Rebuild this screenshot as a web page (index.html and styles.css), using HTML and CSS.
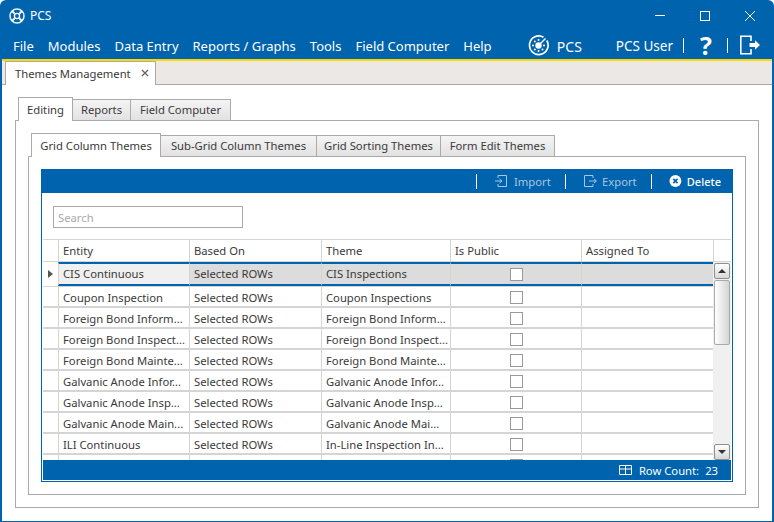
FILE: index.html
```html
<!DOCTYPE html>
<html lang="en">
<head>
<meta charset="utf-8">
<title>PCS</title>
<link rel="stylesheet" href="styles.css">
</head>
<body>
<div class="window">
  <header class="titlebar">
    <svg class="app-logo" width="16" height="16" viewBox="0 0 16 16"><circle cx="8" cy="8" r="7" fill="none" stroke="#fff" stroke-width="1.6" opacity=".9"/><circle cx="8" cy="8" r="2.6" fill="none" stroke="#fff" stroke-width="1.4"/><path d="M3 3l2.6 2.6M13 3l-2.6 2.6M3 13l2.6-2.6M13 13l-2.6-2.6" stroke="#fff" stroke-width="1.8"/></svg>
    <span class="app-title">PCS</span>
    <div class="win-controls">
      <svg width="12" height="12" viewBox="0 0 12 12"><path d="M1 5.500h10" stroke="#fff"/></svg>
      <svg width="12" height="12" viewBox="0 0 12 12"><rect x="1.500" y="1.500" width="9" height="9" fill="none" stroke="#fff"/></svg>
      <svg width="12" height="12" viewBox="0 0 12 12"><path d="M1 1l10 10M11 1L1 11" stroke="#fff"/></svg>
    </div>
  </header>
  <nav class="menubar">
    <span>File</span><span>Modules</span><span>Data Entry</span><span>Reports / Graphs</span><span>Tools</span><span>Field Computer</span><span>Help</span>
    <div class="menu-right">
      <svg class="pcs-logo" width="21" height="21" viewBox="0 0 21 21"><path d="M15.500 2.200A9.300 9.300 0 1 0 18.800 5.500" fill="none" stroke="#fff" stroke-width="1.700"/><circle cx="10.500" cy="10.500" r="3.200" fill="#fff"/><path d="M12.500 8.500l5-5" stroke="#fff" stroke-width="1.500"/><circle cx="5" cy="10.500" r="1" fill="#fff"/><circle cx="10.500" cy="16" r="1" fill="#fff"/><circle cx="6.800" cy="6.500" r="1" fill="#fff"/><circle cx="6.800" cy="14.500" r="1" fill="#fff"/><circle cx="14.500" cy="14.500" r="1" fill="#fff"/><circle cx="16" cy="10.500" r="1" fill="#fff"/><circle cx="10.500" cy="5" r="1" fill="#fff"/></svg>
      <span class="pcs-name">PCS</span>
      <span class="user">PCS User</span>
      <i class="sep"></i>
      <span class="help">?</span>
      <i class="sep"></i>
      <svg class="exit" width="20" height="20" viewBox="0 0 20 20"><path d="M11 6V1.200H.8v17.600H11V14" fill="none" stroke="#fff" stroke-width="1.600"/><path d="M9.500 8H15V5.200l5 4.800-5 4.800V12H9.500z" fill="#fff"/></svg>
    </div>
  </nav>
  <div class="accent"></div>
  <div class="doc-strip">
    <div class="doc-tab">Themes Management<svg class="close" width="8" height="8" viewBox="0 0 8 8"><path d="M1 1l6 6M7 1L1 7" stroke="#666" stroke-width="1.400"/></svg></div>
  </div>
  <main class="content">
    <div class="tabs">
      <span class="tab active t-editing">Editing</span>
      <span class="tab t-reports">Reports</span>
      <span class="tab t-field">Field Computer</span>
    </div>
    <section class="panel outer">
      <div class="tabs">
        <span class="tab active t-grid">Grid Column Themes</span>
        <span class="tab t-sub">Sub-Grid Column Themes</span>
        <span class="tab t-sort">Grid Sorting Themes</span>
        <span class="tab t-form">Form Edit Themes</span>
      </div>
      <section class="panel inner">
        <div class="gridbox">
          <div class="toolbar">
            <i class="tsep"></i>
            <span class="tool off t-import"><svg width="14" height="14" viewBox="0 0 14 14"><path d="M4 4V1.500h8.500v11H4V10" fill="none" stroke="#a9c6e0"/><path d="M1 7h6.500M5.500 5l2.500 2-2.500 2" fill="none" stroke="#a9c6e0"/></svg>Import</span>
            <i class="tsep"></i>
            <span class="tool off t-export"><svg width="15" height="14" viewBox="0 0 15 14"><path d="M10 4V1.500H1.500v11H10V10" fill="none" stroke="#a9c6e0"/><path d="M6 7h7M11 5l2.500 2L11 9" fill="none" stroke="#a9c6e0"/></svg>Export</span>
            <i class="tsep"></i>
            <span class="tool on"><svg width="14" height="14" viewBox="0 0 14 14"><circle cx="7" cy="7" r="6.500" fill="#fff"/><path d="M4.700 4.700l4.600 4.600M9.300 4.700L4.700 9.300" stroke="#0063ad" stroke-width="1.800"/></svg>Delete</span>
          </div>
          <div class="search-area"><div class="search">Search</div></div>
          <div class="grid-head">
            <div></div><div>Entity</div><div>Based On</div><div>Theme</div><div>Is Public</div><div>Assigned To</div><div></div>
          </div>
          <div class="grid-main">
            <div class="rows">
              <div class="row selected"><div class="rh"><i class="arrow"></i></div><div class="c first">CIS Continuous</div><div class="c">Selected ROWs</div><div class="c">CIS Inspections</div><div class="c ck"><i class="box"></i></div><div class="c"></div></div>
              <div class="row"><div class="rh"></div><div class="c">Coupon Inspection</div><div class="c">Selected ROWs</div><div class="c">Coupon Inspections</div><div class="c ck"><i class="box"></i></div><div class="c"></div></div>
              <div class="row"><div class="rh"></div><div class="c">Foreign Bond Inform...</div><div class="c">Selected ROWs</div><div class="c">Foreign Bond Inform...</div><div class="c ck"><i class="box"></i></div><div class="c"></div></div>
              <div class="row"><div class="rh"></div><div class="c">Foreign Bond Inspect...</div><div class="c">Selected ROWs</div><div class="c">Foreign Bond Inspect...</div><div class="c ck"><i class="box"></i></div><div class="c"></div></div>
              <div class="row"><div class="rh"></div><div class="c">Foreign Bond Mainte...</div><div class="c">Selected ROWs</div><div class="c">Foreign Bond Mainte...</div><div class="c ck"><i class="box"></i></div><div class="c"></div></div>
              <div class="row"><div class="rh"></div><div class="c">Galvanic Anode Infor...</div><div class="c">Selected ROWs</div><div class="c">Galvanic Anode Infor...</div><div class="c ck"><i class="box"></i></div><div class="c"></div></div>
              <div class="row"><div class="rh"></div><div class="c">Galvanic Anode Insp...</div><div class="c">Selected ROWs</div><div class="c">Galvanic Anode Insp...</div><div class="c ck"><i class="box"></i></div><div class="c"></div></div>
              <div class="row"><div class="rh"></div><div class="c">Galvanic Anode Main...</div><div class="c">Selected ROWs</div><div class="c">Galvanic Anode Mai...</div><div class="c ck"><i class="box"></i></div><div class="c"></div></div>
              <div class="row"><div class="rh"></div><div class="c">ILI Continuous</div><div class="c">Selected ROWs</div><div class="c">In-Line Inspection In...</div><div class="c ck"><i class="box"></i></div><div class="c"></div></div>
              <div class="row"><div class="rh"></div><div class="c"></div><div class="c"></div><div class="c"></div><div class="c ck"><i class="box"></i></div><div class="c"></div></div>
            </div>
            <div class="scrollbar">
              <div class="sb-btn"><i class="up"></i></div>
              <div class="thumb"></div>
              <div class="track"></div>
              <div class="sb-btn"><i class="down"></i></div>
            </div>
          </div>
          <div class="footer">
            <svg width="13" height="10" viewBox="0 0 13 10"><path d="M.5 .5h12v9H.5zM.5 4h12M6.500 .5v9" fill="none" stroke="#fff"/></svg>
            <span>Row Count:</span><span class="count">23</span>
          </div>
        </div>
      </section>
    </section>
  </main>
</div>
</body>
</html>
```
FILE: styles.css
```css
* { box-sizing: border-box; }
html, body { margin: 0; height: 100%; background: #fff; }
body { font: 11.25px "Noto Sans", "Open Sans", sans-serif; color: #3a3a3a; overflow: hidden; }
i { display: block; }

.window { width: 774px; height: 522px; background: #0063ad; padding: 0 2px 1px; display: flex; flex-direction: column; border-radius: 6px 6px 0 0; overflow: hidden; }

.titlebar { height: 31px; flex: none; display: flex; align-items: center; padding-left: 7px; color: #fff; }
.app-logo { margin-right: 5px; }
.app-title { font-size: 12px; }
.win-controls { margin-left: auto; display: flex; gap: 33px; padding-right: 16px; }

.menubar { height: 28px; flex: none; display: flex; align-items: center; padding: 2px 0 0 11px; gap: 14px; color: #fff; font-size: 13px; white-space: nowrap; }
.menu-right { margin-left: auto; display: flex; align-items: center; padding-right: 12px; }
.pcs-logo { margin: -2px 8px 0 0; }
.pcs-name { margin-right: 34px; font-size: 14px; }
.user { margin-right: 10px; font-size: 13.5px; }
.sep { width: 1px; height: 15px; margin-top: -2px; background: #fff; }
.help { font: bold 25px/28px "Open Sans", sans-serif; margin: -2px 14px 0 15px; width: 14px; text-align: center; }
.exit { margin: -2px 0 0 12px; }

.accent { height: 2px; flex: none; background: #ffd800; }

.doc-strip { height: 24px; flex: none; background: #ece8e6; border-bottom: 1px solid #aaa; padding-left: 3px; display: flex; }
.doc-tab { width: 151px; height: 24px; background: #fff; border: 1px solid #aaa; border-width: 1px 1px 0; padding-left: 9px; display: flex; align-items: center; }
.close { margin-left: 10px; margin-top: -1px; }

.content { flex: 1; min-height: 0; background: #fff; padding: 12px 13px 13px; display: flex; flex-direction: column; }

.tabs { display: flex; align-items: flex-end; height: 24px; flex: none; padding-left: 3px; position: relative; z-index: 1; margin-bottom: -1px; }
.tab { height: 22px; line-height: 20px; text-align: center; border: 1px solid #aaa; border-left-width: 0; background: linear-gradient(#f4f4f4, #e2e2e2); }
.tab.active { height: 24px; line-height: 24px; background: #fff; border-left-width: 1px; border-bottom: 0; }
.t-editing { width: 55px; }
.t-reports { width: 58px; }
.t-field { width: 100px; }
.t-grid { width: 130px; }
.t-sub { width: 156px; }
.t-sort { width: 124px; }
.t-form { width: 114px; }

.panel { border: 1px solid #aaa; flex: 1; min-height: 0; display: flex; flex-direction: column; }
.outer { padding: 12px; }
.inner { padding: 12px; }

.gridbox { flex: 1; min-height: 0; border: 1px solid #0063ad; border-top: 0; padding: 0 1px 1px; display: flex; flex-direction: column; background: #fff; }

.toolbar { height: 24px; flex: none; background: #0063ad; display: flex; align-items: center; justify-content: flex-end; color: #fff; margin: 0 -2px; padding-right: 12px; }
.tsep { width: 1px; height: 15px; background: #fff; }
.tool { display: flex; align-items: center; gap: 6px; flex: none; }
.tool.off { color: #a9c6e0; }
.t-import { width: 88px; padding-left: 17px; }
.t-export { width: 85px; padding-left: 17px; gap: 4px; }
.tool.on { width: 69px; font-weight: 500; font-size: 11px; gap: 5px; padding-left: 17px; white-space: nowrap; }

.search-area { height: 46px; flex: none; padding: 13px 10px 0; }
.search { width: 190px; height: 22px; border: 1px solid #aaa; color: #aaa; padding-left: 4px; line-height: 21px; }

.grid-head { height: 22px; flex: none; display: grid; grid-template-columns: 15px 131px 132px 129px 131px 132px 18px; border-top: 1px solid #d5d5d5; }
.grid-head div { border-left: 1px solid #d5d5d5; padding-left: 4px; line-height: 22px; }
.grid-head div:first-child { border-left: 0; }

.grid-main { flex: 1; min-height: 0; display: flex; border-top: 1px solid #d5d5d5; }
.rows { flex: 1; min-width: 0; overflow: hidden; }
.row { height: 21px; display: grid; grid-template-columns: 15px 131px 132px 129px 131px 132px; border-bottom: 2px solid #d5d5d5; }
.rh { display: flex; align-items: center; justify-content: center; }
.c { border-left: 1px solid #d5d5d5; padding: 1px 0 0 4px; line-height: 19px; white-space: nowrap; overflow: hidden; }
.ck { display: flex; align-items: center; justify-content: center; padding: 2px 0 0; }
.box { width: 13px; height: 13px; border: 1px solid #999; background: #fff; }

.row.selected { height: 25px; background: #dcdcdc; border-bottom: 1px solid #d5d5d5; }
.row.selected .rh { background: #fff; }
.row.selected .c { border-top: 2px solid #0063ad; border-bottom: 2px solid #0063ad; padding-top: 0; line-height: 20px; }
.row.selected .ck { padding: 0; }
.row.selected .first { background: #f0f0f0; }
.arrow { width: 0; height: 0; border-style: solid; border-width: 4px 0 4px 5px; border-color: transparent transparent transparent #555; }

.scrollbar { width: 18px; flex: none; background: #f0f0f0; display: flex; flex-direction: column; padding: 1px 1px 0; }
.sb-btn { height: 16px; flex: none; border: 1px solid #8f8f8f; border-radius: 2px; background: linear-gradient(#fff, #d8d8d8); display: flex; align-items: center; justify-content: center; }
.up { border-style: solid; border-width: 0 4px 4px; border-color: transparent transparent #333; }
.down { border-style: solid; border-width: 4px 4px 0; border-color: #333 transparent transparent; }
.thumb { height: 65px; flex: none; margin-top: 1px; border: 1px solid #aaa; border-radius: 2px; background: linear-gradient(90deg, #fff, #d4d4d4); }
.track { flex: 1; }

.footer { height: 20px; flex: none; background: #0063ad; color: #fff; display: flex; align-items: center; justify-content: flex-end; padding-right: 13px; }
.footer svg { margin-right: 7px; }
.count { margin-left: 6px; }
```
